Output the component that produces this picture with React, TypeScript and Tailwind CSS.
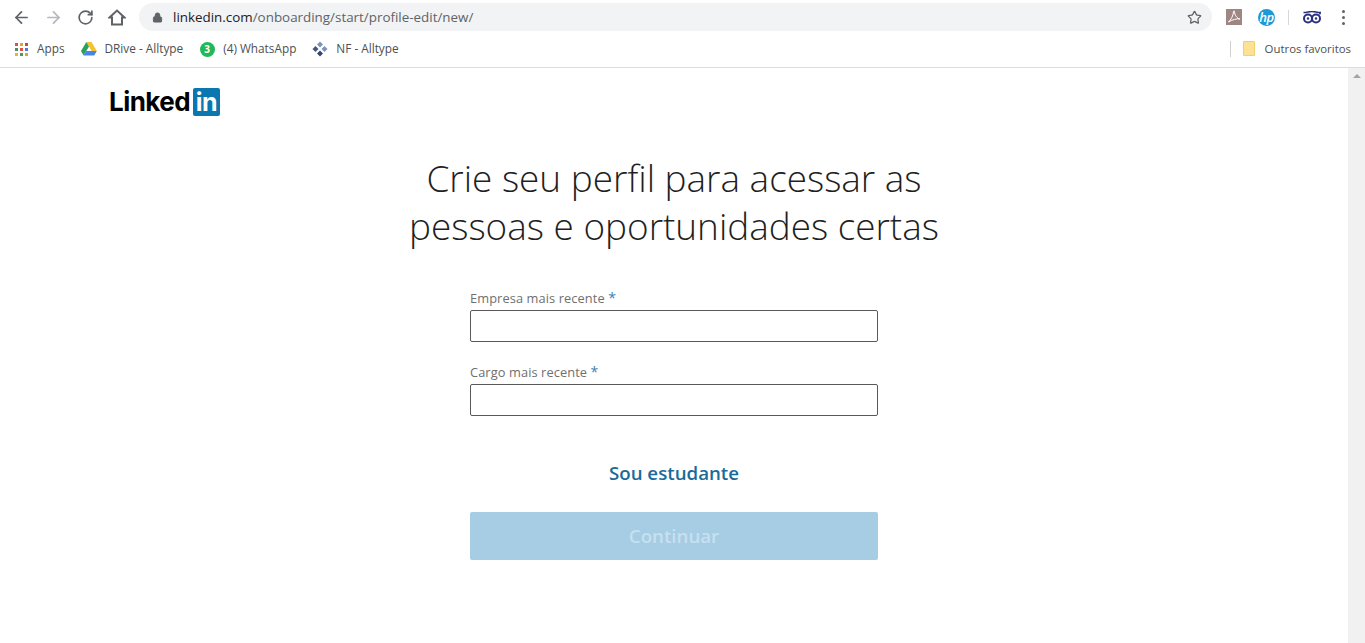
import React from 'react';
import { ArrowLeft, ArrowRight, RotateCw, Lock, Star } from 'lucide-react';

const GridDot = ({ color }: { color: string }) => <span className={`w-[3px] h-[3px] ${color}`} />;

const AppsIcon = () => (
  <span className="grid grid-cols-3 gap-[2px] w-[13px] h-[13px]">
    <GridDot color="bg-[#d9534a]" />
    <GridDot color="bg-[#e0a33a]" />
    <GridDot color="bg-[#c9483f]" />
    <GridDot color="bg-[#4a8f5c]" />
    <GridDot color="bg-[#d9534a]" />
    <GridDot color="bg-[#4a7fd0]" />
    <GridDot color="bg-[#e5b53c]" />
    <GridDot color="bg-[#4a9a5f]" />
    <GridDot color="bg-[#e0a33a]" />
  </span>
);

const DriveIcon = () => (
  <svg width="16" height="14" viewBox="0 0 16 14">
    <path d="M5.3 0h5.2l5.3 9h-5.2z" fill="#f2c230" />
    <path d="M5.3 0 0 9l2.6 4.6L8 4.6z" fill="#2fa05c" />
    <path d="M2.6 13.6h10.6L15.8 9H5.2z" fill="#4a84e8" />
  </svg>
);

const WhatsAppIcon = () => (
  <span className="flex items-center justify-center w-[15px] h-[15px] rounded-full bg-[#20b858] text-white text-[10px] font-bold leading-none">3</span>
);

const DiamondsIcon = () => (
  <svg width="16" height="16" viewBox="0 0 16 16">
    <path d="M8 0.5 11 3.5 8 6.5 5 3.5z" fill="#7f93b8" />
    <path d="M3.5 5 6.5 8 3.5 11 0.5 8z" fill="#43577f" />
    <path d="M12.5 5 15.5 8 12.5 11 9.5 8z" fill="#7f93b8" />
    <path d="M8 9.5 11 12.5 8 15.5 5 12.5z" fill="#34486f" />
  </svg>
);

const HomeIcon = () => (
  <svg width="18" height="17" viewBox="0 0 18 17" fill="none" stroke="#5f6368" strokeWidth="2">
    <path d="M1.500 8.500 9 1.500l7.500 7h-2.500v7H4v-7z" strokeLinejoin="miter" />
  </svg>
);

const PdfIcon = () => (
  <svg width="16" height="16" viewBox="0 0 16 16">
    <rect width="16" height="16" fill="#a08683" />
    <path d="M2.5 13C5 11 7.5 6 7.5 2.5c0-1 1-1 1 0C8.5 6 11 9.5 14 10c-3-.6-7.500 .5-11.500 3z" fill="none" stroke="#fff" strokeWidth="1" />
  </svg>
);

const HpIcon = () => (
  <span className="flex items-center justify-center w-[17px] h-[17px] rounded-full bg-[#1a9ad6] text-white text-[13px] italic font-semibold leading-none tracking-[-0.5px]">hp</span>
);

const OwlIcon = () => (
  <svg width="18" height="13" viewBox="0 0 18 13">
    <path d="M0.500 1.500C4 1.500 6 0.500 9 0.500s5 1 8.500 1L16.500 3.500" fill="none" stroke="#2b2f7f" strokeWidth="1.500" />
    <circle cx="5" cy="7.500" r="4" fill="none" stroke="#2b2f7f" strokeWidth="2" />
    <circle cx="13" cy="7.500" r="4" fill="none" stroke="#2b2f7f" strokeWidth="2" />
    <circle cx="5" cy="7.500" r="1.200" fill="#2b2f7f" />
    <circle cx="13" cy="7.500" r="1.200" fill="#2b2f7f" />
  </svg>
);

const Bookmark = ({ icon, label, className }: { icon: React.ReactNode; label: string; className: string }) => (
  <div className={`flex items-center gap-[8px] ${className}`}>
    <span className="w-[16px] flex justify-center">{icon}</span>
    <span className="text-[11.8px] text-[#4d4f52]">{label}</span>
  </div>
);

const Field = ({ label }: { label: string }) => (
  <div className="flex flex-col">
    <label className="text-[12.8px] leading-[18px] text-[#6f6f6f] tracking-[0.1px]">
      {label} <span className="text-[14px] text-[#3f7fb5]">*</span>
    </label>
    <input type="text" className="mt-[3px] h-[32px] w-full rounded-[2px] border border-[#595959] bg-white" />
  </div>
);

export default function App() {
  return (
    <div className="h-[643px] w-[1365px] overflow-hidden bg-white flex flex-col font-['Open_Sans',sans-serif]">
      {/* browser toolbar */}
      <div className="h-[34px] flex items-center shrink-0 pl-[12px]">
        <ArrowLeft className="w-[19px] h-[19px] text-[#5f6368]" strokeWidth={2.2} />
        <ArrowRight className="w-[19px] h-[19px] ml-[13px] text-[#b5b7ba]" strokeWidth={2.2} />
        <RotateCw className="w-[17px] h-[17px] ml-[14px] text-[#5f6368]" strokeWidth={2.4} />
        <span className="ml-[14px]"><HomeIcon /></span>
        <div className="ml-[13px] h-[28px] w-[1073px] rounded-full bg-[#f1f3f4] flex items-center pl-[13px] pr-[10px]">
          <Lock className="w-[11px] h-[11px] text-[#5f6368] fill-[#5f6368]" />
          <span className="ml-[10px] text-[13.4px] text-[#5f6368]">
            <span className="text-[#202124]">linkedin.com</span>/onboarding/start/profile-edit/new/
          </span>
          <Star className="ml-auto w-[15px] h-[15px] text-[#5f6368]" strokeWidth={2} />
        </div>
        <span className="ml-[14px]"><PdfIcon /></span>
        <span className="ml-[16px]"><HpIcon /></span>
        <span className="ml-[13px] w-px h-[15px] bg-[#d8d8d8]" />
        <span className="ml-[14px]"><OwlIcon /></span>
        <div className="ml-[21px] flex flex-col gap-[3px]">
          <span className="w-[3px] h-[3px] rounded-full bg-[#5f6368]" />
          <span className="w-[3px] h-[3px] rounded-full bg-[#5f6368]" />
          <span className="w-[3px] h-[3px] rounded-full bg-[#5f6368]" />
        </div>
      </div>

      {/* bookmarks bar */}
      <div className="h-[34px] flex items-center shrink-0 border-b border-[#dadce0] pl-[13px] pr-[14px] pb-[3px]">
        <Bookmark icon={<AppsIcon />} label="Apps" className="" />
        <Bookmark icon={<DriveIcon />} label="DRive - Alltype" className="ml-[16px]" />
        <Bookmark icon={<WhatsAppIcon />} label="(4) WhatsApp" className="ml-[16px]" />
        <Bookmark icon={<DiamondsIcon />} label="NF - Alltype" className="ml-[16px]" />
        <div className="ml-auto flex items-center">
          <span className="w-px h-[16px] bg-[#d0d0d0]" />
          <span className="ml-[12px] w-[12px] h-[15px] rounded-[1px] bg-[#fde293] border border-[#f0cf70]" />
          <span className="ml-[10px] text-[11.4px] text-[#4d4f52]">Outros favoritos</span>
        </div>
      </div>

      {/* page */}
      <div className="flex-1 flex min-h-0">
        <main className="flex-1 min-w-0">
          <div className="pl-[109px] pt-[17px] flex items-center h-[34px] box-content">
            <span className="font-['Inter',sans-serif] font-bold text-[26px] leading-[28px] tracking-[-0.55px] text-black">Linked</span>
            <span className="ml-[3px] flex items-end justify-center w-[27px] h-[28px] rounded-[2px] bg-[#0a77b0] font-['Inter',sans-serif] font-bold text-[25px] leading-[28px] tracking-[-0.5px] text-white">in</span>
          </div>
          <div className="flex flex-col items-center">
            <h1 className="mt-[35px] w-[700px] text-center text-[36.9px] leading-[48px] font-light text-[#1f1f1f]">
              Crie seu perfil para acessar as<br />pessoas e oportunidades certas
            </h1>
            <div className="mt-[39px] w-[408px] flex flex-col gap-[21px]">
              <Field label="Empresa mais recente" />
              <Field label="Cargo mais recente" />
            </div>
            <a className="mt-[43px] text-[18.7px] leading-[28px] font-semibold text-[#1a6a9c]">Sou estudante</a>
            <button className="mt-[25px] w-[408px] h-[48px] pt-[1px] rounded-[2px] bg-[#a7cde4] text-[18.7px] font-semibold text-[#c6e0f0]">Continuar</button>
          </div>
        </main>
        <div className="w-[17px] shrink-0 bg-[#f1f1f1] flex justify-center pt-[6px]">
          <span className="w-0 h-0 border-x-[4px] border-x-transparent border-b-[4px] border-b-[#a3a3a3]" />
        </div>
      </div>
    </div>
  );
}
